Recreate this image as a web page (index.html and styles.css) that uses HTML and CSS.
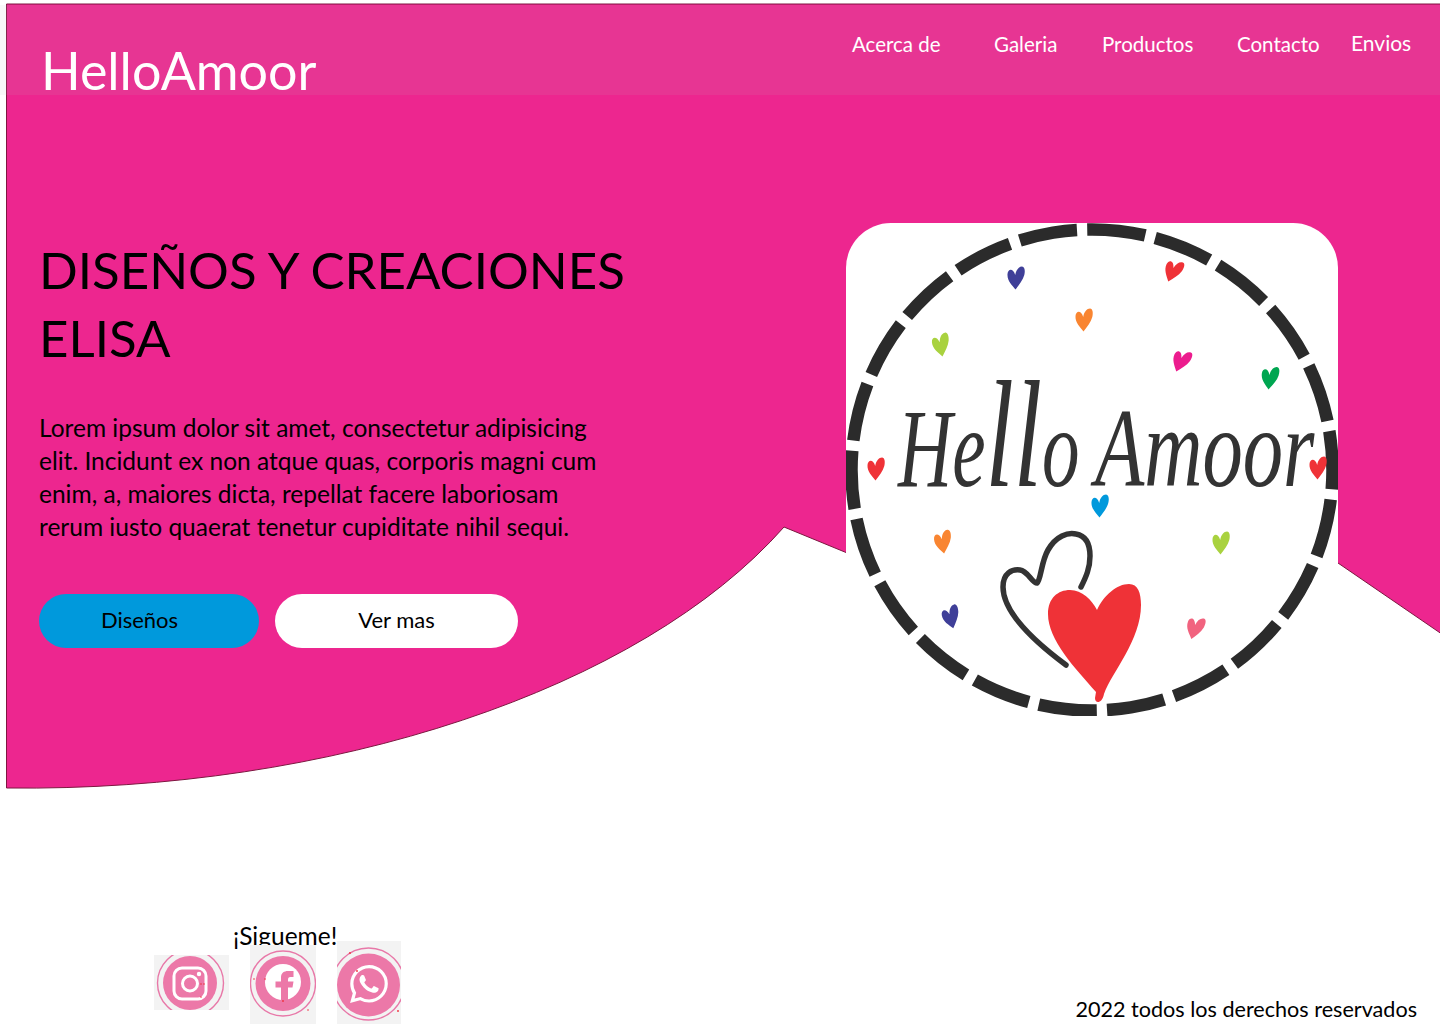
FILE: index.html
```html
<!DOCTYPE html>
<html lang="es">
<head>
<meta charset="utf-8">
<title>HelloAmoor</title>
<link rel="stylesheet" href="styles.css">
</head>
<body>
<div class="page">
  <svg class="backdrop" viewBox="0 0 1440 1024" aria-hidden="true">
    <path class="backdrop-shape" d="M6.5 4 H1441 V633.5 L1338 563 L846 552.5 L784 527 C640 690 330 792 6.5 788 Z"/>
  </svg>

  <header class="topbar">
    <h2 class="brand">HelloAmoor</h2>
    <nav class="nav">
      <a class="nav-link">Acerca de</a>
      <a class="nav-link">Galeria</a>
      <a class="nav-link">Productos</a>
      <a class="nav-link">Contacto</a>
      <a class="nav-link nav-link-raised">Envios</a>
    </nav>
  </header>

  <main class="hero">
    <section class="hero-copy">
      <h1 class="hero-title">DISEÑOS Y CREACIONES ELISA</h1>
      <p class="hero-text">Lorem ipsum dolor sit amet, consectetur adipisicing elit. Incidunt ex non atque quas, corporis magni cum enim, a, maiores dicta, repellat facere laboriosam rerum iusto quaerat tenetur cupiditate nihil sequi.</p>
      <div class="hero-actions">
        <a class="btn btn-primary">Diseños</a>
        <a class="btn btn-light">Ver mas</a>
      </div>
    </section>

    <svg class="logo" viewBox="846 223 492 493" role="img" aria-label="Hello Amoor">
      <defs>
        <path id="h" d="M-.5 11.5 C-4 7-9 2.500-8.500-4 C-8.200-9-3-10.500-.8-3 C.2-8.500 3-11.500 6-11.500 C8.800-11.500 9.300-7 8.300-3 C7 2 3 7-.5 11.500Z"/>
      </defs>
      <circle class="logo-ring" cx="1092" cy="470" r="240.500" pathLength="22" stroke-dasharray=".85 .15" transform="rotate(-9.300 1092 470)"/>
      <use href="#h" fill="#3f3f98" transform="translate(1016 278)"/>
      <use href="#h" fill="#ef3237" transform="translate(1173 271) rotate(22)"/>
      <use href="#h" fill="#f98531" transform="translate(1084 320)"/>
      <use href="#h" fill="#a9d23f" transform="translate(941 345) rotate(-10)"/>
      <use href="#h" fill="#ec1c8e" transform="translate(1181 361) rotate(22)"/>
      <use href="#h" fill="#00a651" transform="translate(1270 378) rotate(5)"/>
      <use href="#h" fill="#ef3237" transform="translate(876 469)"/>
      <use href="#h" fill="#ef3237" transform="translate(1318 468)"/>
      <use href="#h" fill="#0099dc" transform="translate(1100 506)"/>
      <use href="#h" fill="#f98531" transform="translate(943 542) rotate(-8)"/>
      <use href="#h" fill="#a9d23f" transform="translate(1221 543)"/>
      <use href="#h" fill="#3f3f98" transform="translate(951 617) rotate(-14)"/>
      <use href="#h" fill="#f1637f" transform="translate(1195 628) rotate(16)"/>
      <text class="logo-script" transform="translate(898 486) scale(.67 1)">He<tspan class="logo-script-tall">ll</tspan>o</text>
      <text class="logo-script" transform="translate(1095 486) scale(.72 1)">Amoor</text>
      <path class="logo-outline" d="M1066 665 C1035 642 1003 612 1003 587 C1003 573 1012 569 1020 570 C1028 571 1032 583 1037 583 C1041 580 1041 562 1048 550 C1056 536 1068 532 1076 534 C1087 536 1090 546 1090 556 C1090 568 1086 577 1081 587"/>
      <path fill="#ef3237" d="M1097 610 C1104 595 1117 584 1129 584 C1138 584 1141 593 1141 605 C1141 640 1112 672 1104 694 C1102 704 1095 704 1095 698 L1096 692 C1075 668 1048 640 1048 614 C1048 598 1058 590 1070 590 C1082 590 1092 600 1097 610 Z"/>
    </svg>
  </main>

  <footer class="footer">
    <div class="social">
      <p class="social-title">¡Sigueme!</p>
      <div class="social-icons">
        <svg class="social-icon social-ig" viewBox="154 955 75 55" role="img" aria-label="Instagram">
          <circle class="ring" cx="190.500" cy="983" r="33"/>
          <circle class="disc" cx="190" cy="983" r="27"/>
          <rect class="glyph-line" x="174" y="968" width="32" height="31" rx="8"/>
          <circle class="glyph-line" cx="190" cy="983.500" r="7.500"/>
          <circle class="glyph-fill" cx="199" cy="974" r="2.200"/>
          <circle class="speck" cx="201" cy="984" r=".8"/><circle class="speck" cx="204" cy="984" r=".8"/><circle class="speck" cx="201" cy="997" r=".8"/>
        </svg>
        <svg class="social-icon social-fb" viewBox="250 945 66 79" role="img" aria-label="Facebook">
          <circle class="ring" cx="283" cy="983.500" r="32.500"/>
          <circle class="disc" cx="283" cy="983.500" r="27.500"/>
          <circle class="glyph-fill" cx="283" cy="982" r="18"/>
          <path class="disc" d="M281 1002 V987.500 H275.500 V981.500 H281 V977.500 C281 973 284 971 288 971 H293.500 V977 H290.500 C288.500 977 288 978 288 980 V981.500 H293.500 L292.500 987.500 H288 V1002 Z"/>
          <circle class="speck" cx="254" cy="979" r=".8"/><circle class="speck" cx="265" cy="979" r=".8"/><circle class="speck" cx="283" cy="1001" r=".9"/><circle class="speck" cx="308" cy="1010" r=".8"/>
        </svg>
        <svg class="social-icon social-wa" viewBox="337 941 64 83" role="img" aria-label="WhatsApp">
          <circle class="ring" cx="368.500" cy="984" r="36"/>
          <circle class="disc" cx="368.500" cy="985" r="31.500"/>
          <path class="glyph-fill" transform="translate(350 965) scale(1.58)" d="M17.472 14.382c-.297-.149-1.758-.867-2.03-.967-.273-.099-.471-.148-.67.15-.197.297-.767.966-.94 1.164-.173.199-.347.223-.644.075-.297-.15-1.255-.463-2.39-1.475-.883-.788-1.48-1.761-1.653-2.059-.173-.297-.018-.458.13-.606.134-.133.298-.347.446-.52.149-.174.198-.298.298-.497.099-.198.05-.371-.025-.52-.075-.149-.669-1.612-.916-2.207-.242-.579-.487-.5-.669-.51-.173-.008-.371-.01-.57-.01-.198 0-.52.074-.792.372-.272.297-1.04 1.016-1.04 2.479 0 1.462 1.065 2.875 1.213 3.074.149.198 2.096 3.2 5.077 4.487.709.306 1.262.489 1.694.625.712.227 1.36.195 1.871.118.571-.085 1.758-.719 2.006-1.413.248-.694.248-1.289.173-1.413-.074-.124-.272-.198-.57-.347m-5.421 7.403h-.004a9.87 9.87 0 01-5.031-1.378l-.361-.214-3.741.982.998-3.648-.235-.374a9.86 9.86 0 01-1.51-5.26c.001-5.45 4.436-9.884 9.888-9.884 2.64 0 5.122 1.03 6.988 2.898a9.825 9.825 0 012.893 6.994c-.003 5.45-4.437 9.884-9.885 9.884m8.413-18.297A11.815 11.815 0 0012.05 0C5.495 0 .16 5.335.157 11.892c0 2.096.547 4.142 1.588 5.945L.057 24l6.305-1.654a11.882 11.882 0 005.683 1.448h.005c6.554 0 11.89-5.335 11.893-11.893a11.821 11.821 0 00-3.48-8.413z"/>
          <circle class="speck" cx="350" cy="953" r=".9"/><circle class="speck" cx="357" cy="971" r=".9"/><circle class="speck" cx="398" cy="1011" r=".9"/>
        </svg>
      </div>
    </div>
    <p class="copyright">2022 todos los derechos reservados</p>
  </footer>
</div>
</body>
</html>
```

FILE: styles.css
```css
* { box-sizing: border-box; }

html, body { margin: 0; padding: 0; background: #fff; }

.page {
  position: relative;
  width: 1440px;
  height: 1024px;
  overflow: hidden;
  font-family: Lato, "Noto Sans", sans-serif;
  color: #000;
}

.backdrop {
  position: absolute;
  inset: 0;
  width: 1440px;
  height: 1024px;
}

.backdrop-shape {
  fill: #ed268f;
  stroke: #7d1740;
  stroke-width: 1;
}

.topbar {
  position: relative;
  height: 90px;
  margin-top: 5px;
  display: flex;
  justify-content: space-between;
  background: rgba(190, 190, 190, .1);
}

.brand {
  margin: 35px 0 0 41px;
  font-size: 52px;
  line-height: 60px;
  font-weight: 400;
  color: #fff;
}

.nav {
  display: grid;
  grid-template-columns: 142px 108px 135px 114px 89px;
  height: 30px;
  margin-top: 24px;
}

.nav-link {
  font-size: 20.500px;
  line-height: 30px;
  color: #fff;
}

.nav-link-raised { margin-top: -1px; font-size: 21px; }

.hero {
  position: relative;
  display: flex;
  justify-content: space-between;
  align-items: flex-start;
  padding: 128px 102px 0 39px;
}

.hero-copy {
  width: 600px;
  padding-top: 13px;
}

.hero-title {
  margin: 0 0 39px;
  width: 600px;
  font-size: 51px;
  line-height: 68px;
  font-weight: 400;
}

.hero-text {
  margin: 0 0 51px;
  width: 570px;
  font-size: 24.500px;
  line-height: 33px;
}

.hero-actions {
  display: flex;
  gap: 16px;
}

.btn {
  display: flex;
  align-items: center;
  justify-content: center;
  height: 54px;
  padding-bottom: 3px;
  border-radius: 27px;
  font-size: 22px;
  color: #000;
}

.btn-primary { width: 220px; padding-right: 19px; background: #0099dc; }
.btn-light { width: 243px; background: #fff; }

.logo {
  display: block;
  width: 492px;
  height: 493px;
  background: #fff;
  border-radius: 45px;
}

.logo-ring {
  fill: none;
  stroke: #2b2b2b;
  stroke-width: 12.500;
}

.logo-script {
  font-family: "Liberation Serif", serif;
  font-style: italic;
  font-size: 112px;
  fill: #333;
}

.logo-script-tall { font-size: 152px; }

.logo-outline {
  fill: none;
  stroke: #333;
  stroke-width: 5.500;
  stroke-linecap: round;
}

.footer {
  position: relative;
  display: flex;
  justify-content: space-between;
  padding: 205px 23px 0 154px;
}

.social-title {
  margin: 0 0 -10px 79px;
  font-size: 24.500px;
  line-height: 30px;
}

.social-icons {
  position: relative;
  display: flex;
  align-items: flex-start;
  gap: 21px;
}

.social-icon { display: block; background: #f3f3f3; }
.social-ig { width: 75px; height: 55px; margin-top: 14px; }
.social-fb { width: 66px; height: 79px; margin-top: 4px; }
.social-wa { width: 64px; height: 83px; }

.ring { fill: none; stroke: #e878a8; stroke-width: 1.400; }
.disc { fill: #ec78a8; }
.glyph-line { fill: none; stroke: #fff; stroke-width: 3; }
.glyph-fill { fill: #fff; }
.speck { fill: #f0303c; }

.copyright {
  margin: 73px 0 0;
  font-size: 21.600px;
  line-height: 30px;
}
```
